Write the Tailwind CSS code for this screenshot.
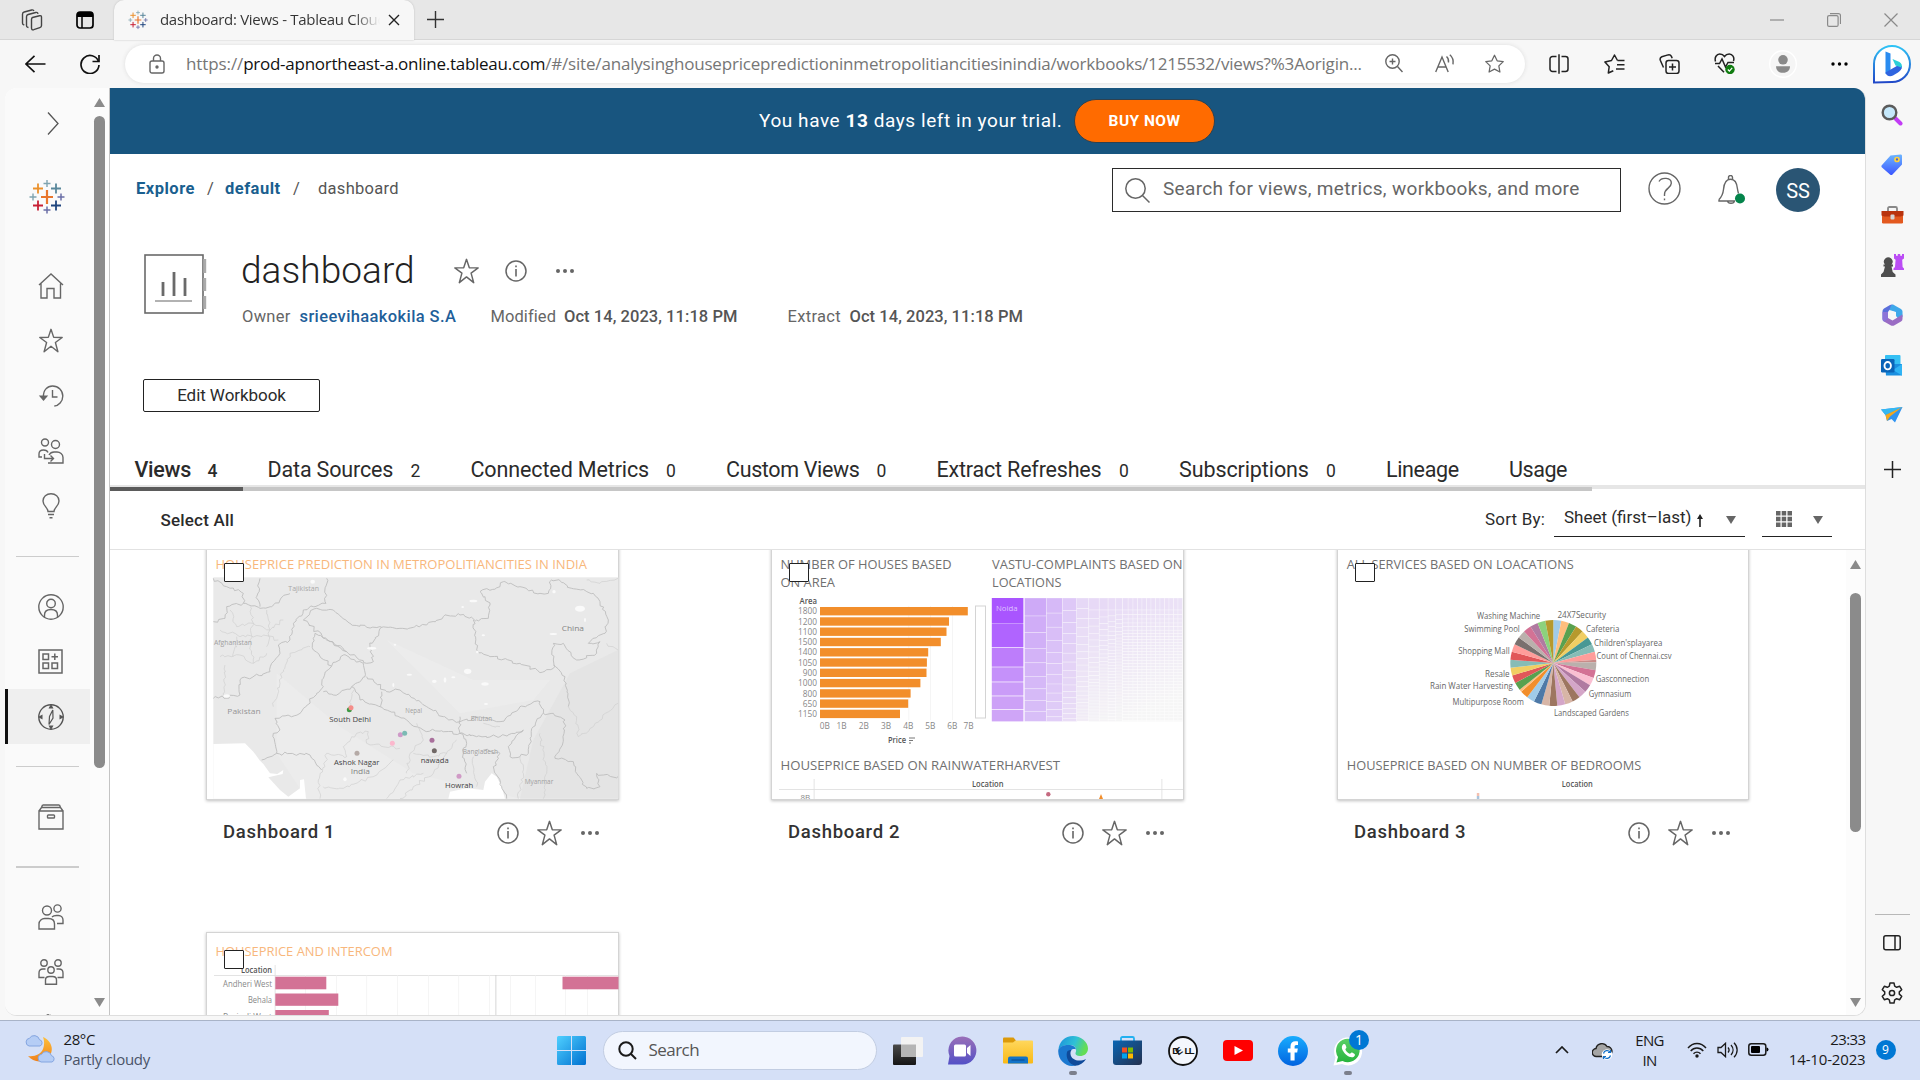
<!DOCTYPE html>
<html lang="en">
<head>
<meta charset="utf-8">
<title>dashboard: Views - Tableau Cloud</title>
<script src="https://cdn.jsdelivr.net/npm/@tailwindcss/browser@4"></script>
</head>
<body class="w-[1920px] h-[1080px] overflow-hidden bg-[#f7f7f7] font-['Roboto',sans-serif] text-[#2b2b2b] flex flex-col">

<svg width="0" height="0" class="absolute">
  <defs>
    <symbol id="star" viewBox="0 0 24 24"><path d="M12 .8l2.700 8.100 8.500.1-6.800 5 2.500 9.200L12 17.700l-6.900 5.500 2.500-9.200-6.800-5 8.500-.1z" fill="none" stroke="#666" stroke-width="1.4" stroke-linejoin="round"/></symbol>
    <symbol id="info" viewBox="0 0 22 22"><circle cx="11" cy="11" r="10" fill="none" stroke="#666" stroke-width="1.5"/><path d="M11 9v7.500M11 5.600v1.700" stroke="#666" stroke-width="1.6"/></symbol>
    <symbol id="dots" viewBox="0 0 18 4"><g fill="#666"><circle cx="2" cy="2" r="2"/><circle cx="9" cy="2" r="2"/><circle cx="16" cy="2" r="2"/></g></symbol>
    <symbol id="tab-logo" viewBox="-18 -20 36 40">
      <path d="M-6 0H6M0-7V7" stroke="#e8762d" stroke-width="2.2"/>
      <path d="M-14-8.500h10M-9-13.500v10" stroke="#eb912c" stroke-width="1.8"/>
      <path d="M4-8.500h10M9-13.500v10" stroke="#59879b" stroke-width="1.8"/>
      <path d="M-14 8.500h10M-9 3.500v10" stroke="#c72035" stroke-width="1.8"/>
      <path d="M4 8.500h10M9 3.500v10" stroke="#1f457e" stroke-width="1.8"/>
      <path d="M-3.500-13.500h7M0-17v7M-17.500 0h7M-14-3.500v7" stroke="#7fa4b0" stroke-width="1.4"/>
      <path d="M-3.500 13h7M0 9.500v7M10.500 0h7M14-3.500v7" stroke="#6a6ea6" stroke-width="1.5"/>
    </symbol>
    <linearGradient id="g-win" x1="0" y1="0" x2="1" y2="1"><stop offset="0" stop-color="#4fd0ff"/><stop offset="1" stop-color="#0070d0"/></linearGradient>
    <linearGradient id="g-bing" x1="0" y1="0" x2="0" y2="1"><stop offset="0" stop-color="#2fc3f5"/><stop offset="1" stop-color="#2148c8"/></linearGradient>
    <linearGradient id="g-tag" x1="0" y1="0" x2="0" y2="1"><stop offset="0" stop-color="#6db6ff"/><stop offset="1" stop-color="#3b55ff"/></linearGradient>
    <linearGradient id="g-moon" x1="0" y1="0" x2="0" y2="1"><stop offset="0" stop-color="#fdc03c"/><stop offset="1" stop-color="#f0811a"/></linearGradient>
    <linearGradient id="g-chat" x1="0" y1="0" x2="0" y2="1"><stop offset="0" stop-color="#9a6fb8"/><stop offset="1" stop-color="#5350c6"/></linearGradient>
    <linearGradient id="g-fold" x1="0" y1="0" x2="0" y2="1"><stop offset="0" stop-color="#ffd75c"/><stop offset="1" stop-color="#f9b916"/></linearGradient>
    <linearGradient id="g-edge" x1="0" y1="0" x2="1" y2=".3"><stop offset="0" stop-color="#1b8fdc"/><stop offset=".6" stop-color="#2fc1d6"/><stop offset="1" stop-color="#63dd55"/></linearGradient>
    <linearGradient id="g-store" x1="0" y1="0" x2="1" y2="1"><stop offset="0" stop-color="#0a66b4"/><stop offset="1" stop-color="#24304e"/></linearGradient>
    <linearGradient id="g-fb" x1="0" y1="0" x2="0" y2="1"><stop offset="0" stop-color="#18acfe"/><stop offset="1" stop-color="#0163e0"/></linearGradient>
    <linearGradient id="g-wa" x1="0" y1="0" x2="0" y2="1"><stop offset="0" stop-color="#5bd066"/><stop offset="1" stop-color="#27b43e"/></linearGradient>
    <linearGradient id="g-dark" x1="0" y1="0" x2="0" y2="1"><stop offset="0" stop-color="#4a4a4a"/><stop offset="1" stop-color="#151515"/></linearGradient>
  </defs>
</svg>

<!-- tab strip -->
<header class="h-10 shrink-0 bg-[#e7e7e7] border-b border-[#d6d6d6] flex items-center font-['Open_Sans',sans-serif]">
  <svg class="ml-[21px] shrink-0" width="23" height="24" viewBox="0 0 23 24" fill="none" stroke="#444" stroke-width="1.4"><path d="M11.500 9.500l7-1.800q2-.4 2 1.600v8.200q0 1.700-1.700 2.200l-6 2q-2.300.6-2.300-1.600v-8.600q0-1.600 1-2z"/><path d="M7.500 19.500l-1-.3q-1-.5-1-1.700V8.800Q5.500 7 7.200 6.500l7.500-2q2-.4 2.300 1.300"/><path d="M3.300 17l-.8-.3q-1-.5-1-1.700V6.300Q1.500 4.500 3.200 4l7.500-2q1.800-.4 2.200 1"/></svg>
  <svg class="ml-8 shrink-0" width="18" height="18" viewBox="0 0 18 18"><rect x="1" y="1" width="16" height="16" rx="3" fill="none" stroke="#000" stroke-width="1.7"/><path d="M1 4a3 3 0 013-3h10a3 3 0 013 3v2H1z"/><path d="M6 5v12" stroke="#000" stroke-width="1.5"/></svg>
  <div class="ml-5 w-[300px] h-10 bg-[#f7f7f7] rounded-t-[10px] shadow-[0_0_2px_#bbb] flex items-center pl-[14px]">
    <svg width="20" height="22" class="shrink-0"><use href="#tab-logo"/></svg>
    <span class="ml-3 w-[220px] overflow-hidden whitespace-nowrap text-[15px] tracking-[-0.305px] leading-10 -mt-px bg-linear-to-r from-[#333] from-88% to-transparent bg-clip-text text-transparent">dashboard: Views - Tableau Cloud</span>
    <svg class="ml-2 shrink-0" width="12" height="12" viewBox="0 0 12 12"><path d="M1 1l10 10M11 1L1 11" stroke="#222" stroke-width="1.4"/></svg>
  </div>
  <svg class="ml-[13px] shrink-0" width="17" height="17" viewBox="0 0 17 17"><path d="M8.500 0v17M0 8.500h17" stroke="#333" stroke-width="1.4"/></svg>
  <div class="ml-auto flex items-center pr-[22px]">
    <svg width="14" height="14" viewBox="0 0 14 14"><path d="M0 7h14" stroke="#8a8a8a" stroke-width="1.2"/></svg>
    <svg class="ml-[43px]" width="14" height="14" viewBox="0 0 14 14" fill="none" stroke="#8a8a8a" stroke-width="1.2"><rect x=".6" y="2.6" width="10.5" height="10.8" rx="1.5"/><path d="M3 .7h8.500a2 2 0 012 2V11"/></svg>
    <svg class="ml-[43px]" width="14" height="14" viewBox="0 0 14 14"><path d="M.5.5l13 13M13.500.5l-13 13" stroke="#8a8a8a" stroke-width="1.2"/></svg>
  </div>
</header>

<!-- address row -->
<div class="h-12 shrink-0 flex items-center font-['Open_Sans',sans-serif]">
  <svg class="ml-[25px] -mt-px shrink-0" width="21" height="18" viewBox="0 0 21 18" fill="none" stroke="#111" stroke-width="1.6"><path d="M20.500 9H1M9.500 .8L1 9l8.500 8.200"/></svg>
  <svg class="ml-[33px] -mt-px shrink-0" width="22" height="20" viewBox="0 0 22 20" fill="none" stroke="#111" stroke-width="1.7"><path d="M19.500 7.500A9 9 0 1020 11"/><path d="M20 1v6.500h-6.500"/></svg>
  <div class="ml-6 w-[1400px] h-[38px] bg-white rounded-full shadow-[0_0_4px_#ddd] flex items-center">
    <svg class="ml-6 -mt-px shrink-0" width="16" height="20" viewBox="0 0 16 20" fill="none" stroke="#666" stroke-width="1.4"><rect x="1" y="7" width="14" height="12" rx="2"/><path d="M4.500 7V4.500a3.500 3.500 0 017 0V7"/><circle cx="8" cy="13" r="1" fill="#666"/></svg>
    <div class="ml-[21px] w-[1176px] whitespace-nowrap text-[17px] leading-6 text-[#767676] tracking-[-0.185px]"><span class="tracking-[-0.1px]">https://</span><span class="text-[#111] tracking-[-0.264px]">prod-apnortheast-a.online.tableau.com</span>/#/site/analysinghousepricepredictioninmetropolitiancitiesinindia/workbooks/1215532/views?%3Aorigin...</div>
    <svg class="ml-[23px] -mt-px shrink-0" width="18" height="19" viewBox="0 0 18 19" fill="none" stroke="#666" stroke-width="1.4"><circle cx="7.5" cy="7.5" r="6.7"/><path d="M12.500 12.500l5 5.500M4.500 7.500h6M7.500 4.500v6"/></svg>
    <svg class="ml-[32px] -mt-px shrink-0" width="20" height="19" viewBox="0 0 20 19" fill="none" stroke="#666" stroke-width="1.4"><path d="M.7 18L7 3l6.200 15M3 13h8"/><path d="M11.500 2.500c1.800 1.500 2.300 3.500 2 6M14.800.8c3 2.500 3.800 6 3.200 9.500"/></svg>
    <svg class="ml-[29px] -mt-px shrink-0" width="21" height="20" viewBox="0 0 24 24"><path d="M12 1.500l3.200 6.700 7.300 1-5.300 5.100 1.300 7.300L12 18.100l-6.500 3.500 1.300-7.300L1.500 9.200l7.300-1z" fill="none" stroke="#666" stroke-width="1.5" stroke-linejoin="round"/></svg>
  </div>
  <div class="ml-[24px] -mt-px flex items-center">
    <svg width="20" height="20" viewBox="0 0 20 20" fill="none" stroke="#222" stroke-width="1.5"><path d="M7.500 2.500H3.500a2.500 2.500 0 00-2.500 2.500v10a2.500 2.500 0 002.500 2.500h4M12.500 2.500h4a2.500 2.500 0 012.500 2.500v10a2.500 2.500 0 01-2.500 2.500h-4M10 .2v19.600"/></svg>
    <svg class="ml-[35px]" width="21" height="20" viewBox="0 0 21 20" fill="none" stroke="#222" stroke-width="1.5"><path d="M13.500 6.500L10.500 1 7.500 6.500.9 8l4.300 4.700-.9 6.300 5-2.300M13.500 6.500H20.500M13 10.800h7.500M12 15h8.500" stroke-linejoin="round"/></svg>
    <svg class="ml-[34px]" width="21" height="20" viewBox="0 0 21 20" fill="none" stroke="#222" stroke-width="1.5"><rect x="7" y="6.5" width="13" height="13" rx="2.5"/><path d="M13.500 9.500v7M10 13h7M4.500 13.500L1.300 6.200C.8 4.500 1.300 3.300 2.800 2.700L9 .9c1.800-.4 2.800.2 3.400 1.500l.8 1.800"/></svg>
    <svg class="ml-[34px]" width="22" height="21" viewBox="0 0 22 21" fill="none" stroke="#222" stroke-width="1.5"><path d="M1.500 8.500C.3 4.500 2.500 1 5.800 1c2.200 0 3.700 1 4.700 2.500C11.500 2 13.200 1 15.200 1c3.300 0 5.500 3.500 4.300 7M1 10.500h4.500L8 6l3.500 8 2.500-4.500h6M4 13l6 6.300"/><circle cx="16" cy="16.5" r="4.7" fill="#107c10" stroke="none"/><path d="M13.800 16.500l1.600 1.600 2.800-3.200" stroke="#fff" stroke-width="1.2"/></svg>
    <svg class="ml-[33px]" width="28" height="28" viewBox="0 0 28 28"><circle cx="14" cy="14" r="13.3" fill="#f5f5f5" stroke="#fff" stroke-width="1.4"/><g fill="#8a8a8a"><circle cx="14" cy="9.8" r="4.8"/><path d="M7 16.300h14c0 4-2.500 6.500-7 6.500s-7-2.500-7-6.500z"/></g></svg>
    <svg class="ml-[34px]" width="17" height="4" viewBox="0 0 17 4"><circle cx="2" cy="2" r="1.7"/><circle cx="8.5" cy="2" r="1.7"/><circle cx="15" cy="2" r="1.7"/></svg>
    <svg class="ml-[24px]" width="40" height="40" viewBox="0 0 40 40"><path d="M2 38.500V20A18 18 0 1120 38z" fill="#fff" stroke="url(#g-bing)" stroke-width="2"/><path d="M13.500 7.500l5 2v17l-5 3.500z" fill="#2a8cf0"/><path d="M13.500 28.500l13-7.500 3.500 1c0 3.500-2 5-4 6.500l-5 3c-3 1.500-7 .5-7.500-3z" fill="#2f64e0"/><path d="M20.500 15l7 3c2.200 1.500 2.800 3.500 2 5.500l-6-2z" fill="#2bd0d8"/></svg>
  </div>
</div>

<div class="h-[932px] shrink-0 flex">
  <!-- page -->
  <div class="ml-[5px] w-[1861px] h-[928px] rounded-[12px] overflow-hidden border-b border-r border-[#dedede] bg-white flex">

    <!-- site navigation -->
    <nav class="w-[85px] pl-px shrink-0 bg-[#fafafa] flex flex-col overflow-hidden">
      <svg class="mt-[24px] ml-[41px] shrink-0" width="12" height="23" viewBox="0 0 12 23" fill="none" stroke="#555" stroke-width="1.3"><path d="M1 .5l10 11L1 22.500"/></svg>
      <svg class="mt-[42px] ml-[23px] shrink-0" width="36" height="40"><use href="#tab-logo"/></svg>
      <div class="mt-[41px] flex flex-col text-[#666]">
        <div class="h-[55px] pl-[32px] flex items-center"><svg width="26" height="26" viewBox="0 0 26 26" fill="none" stroke="currentColor" stroke-width="1.4"><path d="M1 12L13 1l12 11M3 10.500V25h6v-9.500h7V25h6.500V10.500"/></svg></div>
        <div class="h-[55px] pl-[33px] flex items-center"><svg width="24" height="25"><use href="#star"/></svg></div>
        <div class="h-[55px] pl-[32px] flex items-center"><svg width="26" height="22" viewBox="0 0 26 22" fill="none" stroke="currentColor" stroke-width="1.4"><path d="M5.500 12C5 5 9.500 1 14.500 1c6 0 10.300 4.500 10.300 10s-4.300 10-8.500 10M14.500 5v7h5"/><path d="M.8 10.500h9.400L5.500 16z" fill="currentColor" stroke="none"/></svg></div>
        <div class="h-[55px] pl-[32px] flex items-center"><svg width="26" height="26" viewBox="0 0 26 26" fill="none" stroke="currentColor" stroke-width="1.4"><circle cx="7" cy="4.5" r="3.5"/><circle cx="17.5" cy="6.5" r="4"/><path d="M4 19H1v-3c0-2.500 2-4 4.500-4 2.500 0 4 1 4.500 2.500M10 25h15v-5.500c0-3.500-3-5.500-6-5.500h-3c-2.500 0-4 1.300-5 3M6.500 16v4.500h9M12.500 17.500l3 3-3 3"/></svg></div>
        <div class="h-[55px] pl-[32px] flex items-center"><svg width="26" height="26" viewBox="0 0 26 26" fill="none" stroke="currentColor" stroke-width="1.4"><path d="M10 18.500c0-4-5-5.500-5-10.500 0-4.500 3.500-7.300 8-7.300S21 3.500 21 8c0 5-5 6.500-5 10.500zM10 21.500h6M11.500 24.700h3"/></svg></div>
      </div>
      <div class="mt-[23px] ml-[10px] w-[63px] h-px shrink-0 bg-[#ccc]"></div>
      <div class="mt-[22px] flex flex-col text-[#666]">
        <div class="h-[55px] pl-[32px] flex items-center"><svg width="26" height="26" viewBox="0 0 26 26" fill="none" stroke="currentColor" stroke-width="1.4"><circle cx="13" cy="13" r="12.2"/><circle cx="13" cy="9.5" r="4.3"/><path d="M6.500 23v-2c0-3.500 2.500-5.500 6.500-5.500s6.500 2 6.500 5.500v2"/></svg></div>
        <div class="h-[55px] pl-[32px] flex items-center"><svg width="25" height="25" viewBox="0 0 25 25" fill="none" stroke="currentColor" stroke-width="1.5"><rect x="1" y="1" width="23" height="23"/><path d="M5 5h5.500v5.500H5zM5 14h5.500v5.500H5zM14 14h5.500v5.500H14zM16.800 4.500V11M13.500 7.800h6.500"/></svg></div>
        <div class="h-[55px] -ml-px pl-[30px] border-l-[3px] border-[#111] bg-[#efefef] flex items-center"><svg width="26" height="26" viewBox="0 0 26 26" fill="none" stroke="#555" stroke-width="1.4"><circle cx="13" cy="13" r="12.2"/><path d="M14.800 6l.2 8-4 6.500.5-8z" stroke-width="1.2"/><path d="M13 0l2.500 4.500h-5zM13 26l2.500-4.500h-5zM0 13l4.500-2.500v5zM26 13l-4.500-2.500v5z" fill="#555" stroke="none"/></svg></div>
      </div>
      <div class="mt-[22px] ml-[10px] w-[63px] h-px shrink-0 bg-[#ccc]"></div>
      <div class="mt-[22px] h-[55px] shrink-0 pl-[32px] flex items-center"><svg width="26" height="26" viewBox="0 0 26 26" fill="none" stroke="#666" stroke-width="1.4"><path d="M1 7h24v18H1zM1 7l2.500-3.500h19L25 7M4.500 1h17M3.500 3.500L4.500 1M22.500 3.500l-1-2.500"/><rect x="9.5" y="11" width="7" height="3" rx=".8"/></svg></div>
      <div class="mt-[22px] ml-[10px] w-[63px] h-0.5 shrink-0 bg-[#ccc]"></div>
      <div class="mt-[21px] flex flex-col text-[#666] shrink-0">
        <div class="h-[55px] pl-[32px] flex items-center"><svg width="26" height="26" viewBox="0 0 26 26" fill="none" stroke="currentColor" stroke-width="1.4"><circle cx="9" cy="6.5" r="4.5"/><circle cx="19.5" cy="4.5" r="3.6"/><path d="M1 25v-5c0-3.500 3-5.500 5.500-5.500h4c3.500 0 6 2 6 5.500v5zM14 13c1-1 3-1.500 4.500-1.500h2c2.500 0 4.500 2 4.500 4.500v3.500h-6"/></svg></div>
        <div class="h-[55px] pl-[32px] flex items-center"><svg width="26" height="26" viewBox="0 0 26 26" fill="none" stroke="currentColor" stroke-width="1.4"><circle cx="6" cy="4" r="3.2"/><circle cx="20" cy="4" r="3.2"/><circle cx="13" cy="11" r="3.2"/><path d="M6.500 18.500H1V14c0-2.500 1.500-4 4-4h2.500M19.500 18.500H25V14c0-2.500-1.500-4-4-4h-2.500M7.500 25.300V21c0-2.500 2-3.500 4-3.500h3c2 0 4 1 4 3.500v4.300z"/></svg></div>
        <div class="h-[55px] pl-[33px] pt-[15px]"><svg width="24" height="4" viewBox="0 0 24 4" fill="none" stroke="#666" stroke-width="1.5"><path d="M0 2.500h4M7 1.500h5M14 2.500h4M20 3h4M9 0v4"/></svg></div>
      </div>
    </nav>
    <div class="w-5 shrink-0 bg-[#fcfcfc] border-r border-[#c4c4c4] flex flex-col items-center">
      <svg class="mt-[10px]" width="11" height="9"><path d="M5.500 0L11 9H0z" fill="#8b8b8b"/></svg>
      <div class="mt-[9px] w-[11px] h-[652px] rounded-full bg-[#8b8b8b]"></div>
      <svg class="mt-auto mb-[8px]" width="11" height="9"><path d="M5.500 9L11 0H0z" fill="#8b8b8b"/></svg>
    </div>

    <main class="flex-1 min-w-0 flex flex-col">
      <div class="h-[66px] shrink-0 bg-[#18557f] text-white flex items-center pl-[649px]">
        <span class="w-[305px] whitespace-nowrap text-[19px] tracking-[0.570px]">You have <b>13</b> days left in your trial.</span>
        <button class="ml-[10px] pt-0.5 w-[141px] h-[44px] rounded-full bg-[#ff6b00] border border-[#2d4150] text-[15.5px] font-bold tracking-[0.450px]">BUY NOW</button>
      </div>

      <div class="h-[72px] shrink-0 flex items-center pl-[26px] text-[16.5px]">
        <div class="flex items-center -mt-px text-[#555]">
          <a class="w-[60px] font-bold text-[#1a5f8f] tracking-[0.5px]">Explore</a><span class="ml-[11px] w-[8px]">/</span>
          <a class="ml-[10px] w-[57px] font-bold text-[#1a5f8f] tracking-[0.5px]">default</a><span class="ml-[11px] w-[8px]">/</span>
          <span class="ml-[17px] tracking-[0.28px]">dashboard</span>
        </div>
        <div class="ml-auto w-[509px] h-[44px] border border-[#2b2b2b] flex items-center pl-[12px] text-[#666]">
          <svg width="25" height="25" viewBox="0 0 25 25" fill="none" stroke="#666" stroke-width="1.5"><circle cx="10.5" cy="10.5" r="9.7"/><path d="M17.500 17.500l7 7"/></svg>
          <span class="ml-[13px] text-[19px] tracking-[0.32px] whitespace-nowrap -mt-px">Search for views, metrics, workbooks, and more</span>
        </div>
        <svg class="ml-[27px] -mt-[3px]" width="33" height="33" viewBox="0 0 33 33" fill="none" stroke="#666" stroke-width="1.4"><circle cx="16.5" cy="16.5" r="15.5"/><path d="M11 9.500c2.500-4.500 12.500-4.300 12.300 1.800C23.200 16.500 16.500 16 16.500 22.500v1.500M16.500 26.500v1.700"/></svg>
        <svg class="ml-[37px]" width="28" height="30" viewBox="0 0 28 30" fill="none" stroke="#666" stroke-width="1.4"><path d="M1 24.500c3.500-3.500 4-5.500 4.500-10C6 8 8.500 4.200 12.500 4.200S19 8 19.500 14c.3 2 .6 3 1 4.500M1 24.500V26h16M10.500 4V2.500a2 2 0 014 0V4M9.500 26c.5 3 6.500 3 7 0"/><circle cx="22" cy="23.5" r="5" fill="#04844b" stroke="none"/></svg>
        <div class="ml-[30px] mr-[45px] size-[44px] rounded-full bg-[#2a5574] text-white text-[20px] flex items-center justify-center pt-0.5">SS</div>
      </div>

      <div class="h-[153px] shrink-0 pl-[34px] flex">
        <svg class="mt-[28px] shrink-0" width="63" height="60" viewBox="0 0 63 60" fill="none" stroke="#6a6a6a" stroke-width="1.6"><rect x="1" y="1" width="58" height="58"/><path d="M60.700 5v14M60.700 24v13M60.700 42v13" stroke="#aaa" stroke-width="3"/><path d="M19 28v14M30 18v24M41 24v18" stroke-width="2.8"/><path d="M11 47h37" stroke="#999"/></svg>
        <div class="ml-[35px] pt-[27px]">
          <div class="h-9 flex items-center">
            <h1 class="w-[173px] -ml-px mr-px text-[37px] leading-9 font-light text-[#222] tracking-[0.05px]">dashboard</h1>
            <svg class="ml-[39px]" width="25" height="26"><use href="#star"/></svg>
            <svg class="ml-[26px]" width="22" height="22"><use href="#info"/></svg>
            <svg class="ml-[29px]" width="18" height="4"><use href="#dots"/></svg>
          </div>
          <div class="mt-[18px] h-5 flex items-center whitespace-nowrap text-[16.5px] text-[#666]">
            <span class="w-[49px] tracking-[0.28px]">Owner</span>
            <span class="ml-[8.5px] w-[157px] font-medium text-[#1f5f9a] tracking-[0.39px]">srieevihaakokila S.A</span>
            <span class="ml-[34px] w-[65px] tracking-[0.08px]">Modified</span>
            <span class="ml-[8.5px] w-[173px] font-medium text-[#555] tracking-[0.05px]">Oct 14, 2023, 11:18 PM</span>
            <span class="ml-[50.5px] w-[54px] tracking-[0.32px]">Extract</span>
            <span class="ml-[8px] font-medium text-[#555] tracking-[0.05px]">Oct 14, 2023, 11:18 PM</span>
          </div>
        </div>
      </div>

      <button class="ml-[33px] pt-px w-[177px] h-[33px] shrink-0 border border-[#222] rounded-[2px] text-[17px] tracking-[-0.06px]">Edit Workbook</button>

      <div class="mt-[33px] h-[40px] shrink-0 pl-[24.5px] flex items-baseline gap-[50px] text-[21.5px] leading-[50px] whitespace-nowrap [&_i]:not-italic [&_i]:text-[17.5px] [&_i]:w-[10px]">
        <div class="flex items-baseline gap-[17px] font-medium"><span class="w-[56px] tracking-[-0.3px]">Views</span><i>4</i></div>
        <div class="flex items-baseline gap-[17px]"><span class="w-[126px] tracking-[-0.15px]">Data Sources</span><i>2</i></div>
        <div class="flex items-baseline gap-[17px]"><span class="w-[178.5px] tracking-[-0.12px]">Connected Metrics</span><i>0</i></div>
        <div class="flex items-baseline gap-[17px]"><span class="w-[133.5px] tracking-[-0.36px]">Custom Views</span><i>0</i></div>
        <div class="flex items-baseline gap-[17px]"><span class="w-[165.5px] tracking-[-0.19px]">Extract Refreshes</span><i>0</i></div>
        <div class="flex items-baseline gap-[17px]"><span class="w-[130px] tracking-[-0.1px]">Subscriptions</span><i>0</i></div>
        <span class="w-[73px] tracking-[-0.364px]">Lineage</span>
        <span class="tracking-[-0.45px]">Usage</span>
      </div>
      <div class="relative h-1 shrink-0 bg-[#e6e6e6]">
        <div class="absolute left-0 top-0.5 h-1 w-[1482px] bg-[#c6c6c6]"><div class="h-1 w-[133px] bg-[#5b5b5b]"></div></div>
      </div>

      <div class="h-[61px] shrink-0 border-b border-[#e2e2e2] flex items-center pl-[50.5px] text-[17px] whitespace-nowrap">
        <span class="font-medium tracking-[0.196px] mt-[3px]">Select All</span>
        <span class="ml-auto w-[60px] mt-0.5 tracking-[0.188px]">Sort By:</span>
        <div class="ml-[9px] w-[191px] h-[36px] border-b border-[#222] flex items-center pl-[10px]">
          <span class="w-[130px] -mt-px">Sheet (first–last)</span>
          <svg class="ml-0.5 mt-1" width="8" height="13" viewBox="0 0 8 13"><path d="M4 0l3 5H4.800v8H3.200V5H1z" fill="#222"/></svg>
          <svg class="ml-[22px] mt-0.5" width="10" height="8"><path d="M0 0h10L5 8z" fill="#666"/></svg>
        </div>
        <div class="ml-[17px] mr-[33px] w-[70px] h-[36px] border-b border-[#222] flex items-center pl-[14px]">
          <svg width="16" height="16" viewBox="0 0 16 16" fill="#666"><path d="M0 0h4.500v4.500H0zM5.700 0h4.500v4.500H5.700zM11.500 0H16v4.500h-4.500zM0 5.700h4.500v4.500H0zM5.700 5.700h4.500v4.500H5.700zM11.500 5.700H16v4.500h-4.500zM0 11.500h4.500V16H0zM5.700 11.500h4.500V16H5.700zM11.500 11.500H16V16h-4.500z"/></svg>
          <svg class="ml-[21px] mt-0.5" width="10" height="8"><path d="M0 0h10L5 8z" fill="#666"/></svg>
        </div>
      </div>

      <div class="flex-1 min-h-0 flex overflow-hidden">
        <div class="flex-1 min-w-0 overflow-hidden">
          <div id="views" class="-mt-[5px] ml-[96px] w-[1543px] grid grid-cols-[413px_413px_413px] gap-x-[152px]"></div>
        </div>
        <div class="w-[19px] shrink-0 bg-[#fcfcfc] flex flex-col items-center pr-[1px]">
          <svg class="mt-[10px] shrink-0" width="11" height="9"><path d="M5.500 0L11 9H0z" fill="#8b8b8b"/></svg>
          <div class="mt-[24px] w-[11px] h-[239px] rounded-full bg-[#8b8b8b]"></div>
          <svg class="mt-auto mb-[8px]" width="11" height="9"><path d="M5.500 9L11 0H0z" fill="#8b8b8b"/></svg>
        </div>
      </div>
    </main>
  </div>

  <!-- browser sidebar -->
  <aside class="flex-1 flex flex-col items-center pr-[2px]">
    <div class="mt-[2px] flex flex-col items-center *:h-[50px] *:flex *:items-center">
      <div><svg width="22" height="22" viewBox="0 0 22 22"><path d="M14 14l5.500 5.500" stroke="#c23cf5" stroke-width="4" stroke-linecap="round"/><circle cx="8.5" cy="8.5" r="6.8" fill="#c5e8fb" stroke="#5b5b5b" stroke-width="2.4"/></svg></div>
      <div><svg width="22" height="22" viewBox="0 0 22 22"><path d="M9.500 1.500L19.500.5c1 0 1.500.5 1.500 1.500v8.500L11.500 20.500c-.8.8-1.700.8-2.500 0L1 13.500c-.8-.8-.8-1.700 0-2.500z" fill="url(#g-tag)"/><circle cx="16" cy="5.5" r="2" fill="#4a60d8" stroke="#ffd23c" stroke-width="1.7"/></svg></div>
      <div><svg width="23" height="18" viewBox="0 0 23 18"><path d="M7 6V2.500Q7 1 8.500 1h6Q16 1 16 2.500V6" fill="none" stroke="#888" stroke-width="1.8"/><rect x="1" y="5" width="21" height="12.5" rx="1.2" fill="#e3591f"/><path d="M.5 5h22v4.500l-3 1h-16l-3-1z" fill="#b9330d"/><rect x="9.5" y="8.5" width="4" height="5" rx="1" fill="#d5d5d5"/></svg></div>
      <div><svg width="23" height="23" viewBox="0 0 23 23"><path d="M13 0h2v1.800h1.800V0h2.400v1.800H21V0h2v4.500l-1.800 1.200.4 7.300 1.400 1.500V16H12.500v-1.500L14 13l.6-7.300L13 4.500z" fill="#bb4df5"/><path d="M0 23v-2.500l2.500-2.500L4 12.500H2.500v-2H4a4.300 4.300 0 116.500 0H12v2h-1.500l1.200 5.500 2.800 2.500V23z" fill="#4e4e4e"/></svg></div>
      <div><svg width="21" height="22" viewBox="0 0 21 22"><path d="M8 1L2 4.500Q.5 5.500.5 7v8q0 1.500 1.500 2.500l4 .500V8.500Q6 7 7.500 6L13 2.500 11.500 1Q10 0 8 1z" fill="#5b6fdb"/><path d="M11 .5l8 4.500q1.500 1 1.500 2.500V13L17 15.500 14 12V8L7.500 6 9 1.500z" fill="#3fa8ea"/><path d="M20.500 10.500V15q0 1.500-1.500 2.500l-6.500 3.800q-2 1-4 0L2 17.500 6 14l4.500 2.500z" fill="#9a6cc4"/><path d="M.5 8v7q0 1.500 1.500 2.500l4-3V8z" fill="#8d74d8"/><circle cx="10.500" cy="11" r="3.6" fill="#f7f7f7"/></svg></div>
      <div><svg width="22" height="21" viewBox="0 0 22 21"><rect x="4" y="0" width="15.5" height="12" rx="1" fill="#35c0f4"/><path d="M4 9h17v11.500H5z" fill="#1a8fe0"/><path d="M21 9l-9 6 9 5.500z" fill="#2fb4f5"/><rect x="0" y="4" width="13.5" height="13.5" rx="1.2" fill="#0a64b8"/><ellipse cx="6.7" cy="10.7" rx="3.2" ry="3.7" fill="none" stroke="#fff" stroke-width="1.9"/></svg></div>
      <div><svg width="22" height="16" viewBox="0 0 22 16"><path d="M0 2.500L21.500 0 14 15.500 10.500 12 6 14 4.500 8z" fill="#2f94f2"/><path d="M0 2.500L21.500 0 4.500 8z" fill="#35b8f2"/><path d="M21 .3L4.500 8 6 14l3-4.500z" fill="#f4a81d"/></svg></div>
    </div>
    <svg class="mt-[21px]" width="17" height="17" viewBox="0 0 17 17"><path d="M8.500 0v17M0 8.500h17" stroke="#222" stroke-width="1.5"/></svg>
    <div class="mt-auto w-[35px] h-px bg-[#b8b8b8]"></div>
    <svg class="mt-[20px]" width="18" height="16" viewBox="0 0 18 16" fill="none" stroke="#222" stroke-width="1.5"><rect x=".8" y=".8" width="16.4" height="14" rx="2"/><path d="M12 .8v14"/></svg>
    <svg class="mt-[31px] mb-[16px]" width="22" height="22" viewBox="0 0 22 22" fill="none" stroke="#222" stroke-width="1.5" stroke-linejoin="round"><path d="M9 1h4l.7 3.200 1.900 1.100 3.100-1 2 3.400-2.400 2.200v2.200l2.400 2.200-2 3.400-3.100-1-1.900 1.100L13 21H9l-.7-3.200-1.900-1.100-3.100 1-2-3.400 2.400-2.200V9.900L1.300 7.700l2-3.400 3.100 1 1.900-1.100z"/><circle cx="11" cy="11" r="2.6"/></svg>
  </aside>
</div>

<!-- taskbar -->
<footer class="h-[60px] shrink-0 bg-[#d5e0f7] border-t border-[#a9b4c8] flex items-center font-['Open_Sans',sans-serif] text-[15px] text-[#1a1a1a]">
  <svg class="ml-[24px] -mt-1 shrink-0" width="32" height="30" viewBox="0 0 32 30"><path d="M19 3c9 4 12 14 5 21-6 5.500-15 4-20-2 7 1 13-2 15-7 1.500-4 1.500-8 0-12z" fill="url(#g-moon)"/><path d="M5 12a4 4 0 01.5-7.800 5.500 5.500 0 0110 1.500 3.300 3.300 0 01.5 6.300z" fill="#b5cdf5" stroke="#84a5e0"/><path d="M17 28a4 4 0 01.5-7.800 5.500 5.500 0 0110 1.500 3.300 3.300 0 01.5 6.300z" fill="#b5cdf5" stroke="#84a5e0"/></svg>
  <div class="ml-[7.5px] w-[110px] leading-5 whitespace-nowrap -mt-1"><div class="tracking-[-0.4px]">28°C</div><div class="text-[#4a5468] tracking-[-0.263px]">Partly cloudy</div></div>
  <svg class="ml-[383.500px] shrink-0" width="29" height="29" viewBox="0 0 29 29" fill="url(#g-win)"><path d="M0 1.500Q0 0 1.500 0H14v14H0zM15 0h12.500Q29 0 29 1.500V14H15zM0 15h14v14H1.500Q0 29 0 27.500zM15 15h14v12.500q0 1.500-1.500 1.500H15z"/></svg>
  <div class="ml-[17px] w-[274px] h-[39px] rounded-full bg-[#f2f6fe] border border-[#c2cde2] flex items-center pl-[14px] shrink-0">
    <svg width="19" height="19" viewBox="0 0 19 19" fill="none" stroke="#1a1a1a" stroke-width="2"><circle cx="8" cy="8" r="6.7"/><path d="M13 13l5 5"/></svg>
    <span class="ml-[11.5px] text-[17px] text-[#555] tracking-[-0.55px] -mt-px">Search</span>
  </div>
  <div class="ml-[3px] flex *:w-[55px] *:h-[58px] *:flex *:items-center *:justify-center *:relative shrink-0">
    <div><svg width="30" height="28" viewBox="0 0 30 28"><rect x="0" y="7.5" width="23" height="20.5" rx="1" fill="url(#g-dark)"/><rect x="8" y="0" width="22" height="20" rx="1" fill="#f3f3f3"/><rect x="8" y="7.5" width="15" height="12.5" fill="#b5b5b5"/></svg></div>
    <div><svg width="29" height="29" viewBox="0 0 29 29"><path d="M0 28.500L1.500 20A14 14 0 1114.500 28.500z" fill="url(#g-chat)"/><rect x="6" y="8.500" width="12" height="12" rx="1.500" fill="#fff"/><path d="M19 12l3.500-3v11L19 17z" fill="#fff"/></svg></div>
    <div><svg width="30" height="27" viewBox="0 0 30 27"><path d="M0 1.500Q0 .5 1 .5h9.500L13 3.500V8H0z" fill="#dc9a0a"/><path d="M0 5.500h10l2.500-2H29q1 0 1 1v21q0 1-1 1H1q-1 0-1-1z" fill="url(#g-fold)"/><path d="M5 26.500v-5q0-2 2-2h16q2 0 2 2v5z" fill="#1273c8"/><path d="M8.500 23h13" stroke="#0b4f94" stroke-width="1.2"/></svg></div>
    <div><svg width="30" height="30" viewBox="0 0 30 30"><path d="M.5 14C.8 6 7 0 15 0s15 6 15 12.500c0 5-4 7.500-8 7.500-3.500 0-5-1.500-4.500-3 1.500-3 .5-7.500-5-8C7 8.500 2 10.500.5 14z" fill="url(#g-edge)"/><path d="M.3 14C1.500 10.500 6.500 8.500 12 9c3.500.3 5.500 2 6 4.500-3-1.500-7 1-6.500 5.500.5 5 5.500 8.500 10.500 7-2 2.500-5 4-8 4C6 29.500-.5 22.500.3 14z" fill="#1b78d0"/><path d="M9 16c-1.500 6 2 12 8 13.700 5-.2 8.500-2.700 11-6.700-7 3.500-15 1-15.500-5-.2-1.500.2-3 1-4-2 0-4 .5-4.500 2z" fill="#0f4a9a"/></svg><span class="absolute bottom-[5px] left-[24px] w-2 h-1 rounded-full bg-[#7b7f8c]"></span></div>
    <div><svg width="29" height="29" viewBox="0 0 29 29"><path d="M8 6V2.500Q8 1 9.500 1h10Q21 1 21 2.500V6" fill="none" stroke="#22b0f0" stroke-width="1.8"/><path d="M0 4.500h29V26q0 3-3 3H3q-3 0-3-3z" fill="url(#g-store)"/><path d="M9 11.500h5v5H9z" fill="#f25022"/><path d="M15 11.500h5v5h-5z" fill="#7fba00"/><path d="M9 17.500h5v5H9z" fill="#00a4ef"/><path d="M15 17.500h5v5h-5z" fill="#ffb900"/></svg></div>
    <div><svg width="30" height="30" viewBox="0 0 30 30"><circle cx="15" cy="15" r="14" fill="#f4f7fd" stroke="#111" stroke-width="1.8"/><text x="4.2 10.200 16.400 20.800" y="18.400 19.600 18.400 18.400" rotate="0 -35 0 0" font-family="Liberation Sans, sans-serif" font-weight="700" font-size="9.5" fill="#111">DELL</text></svg></div>
    <div><svg width="30" height="21" viewBox="0 0 30 21"><rect width="30" height="21" rx="4" fill="#f00"/><path d="M11.500 6l8.500 4.500-8.500 4.500z" fill="#fff"/></svg></div>
    <div><svg width="30" height="30" viewBox="0 0 30 30"><circle cx="15" cy="15" r="15" fill="url(#g-fb)"/><path d="M12.500 24.500v-8H9.800v-4h2.700v-2.300c0-3.200 2-5 5-5 1 0 2 .2 2.500.3V9h-1.700c-1.300 0-1.700.8-1.700 1.700v1.800h3.200l-.6 4h-2.600v8z" fill="#fff"/></svg></div>
    <div><svg width="30" height="30" viewBox="0 0 30 30"><path d="M.5 29.500l2-8A14 14 0 119 28z" fill="#fff"/><path d="M3.500 26.500l1.500-5.500A11.800 11.800 0 119.500 25z" fill="url(#g-wa)"/><path d="M10 8.500c-3 3 .5 8 3.500 10.500s7.500 3.500 8.500 0c.3-1-2.500-2.600-3.300-2.600-1 0-1.200 1.500-2 1.300-1.800-.7-3.800-2.700-4.300-4.200-.2-.8 1.200-1.200 1-2.200C13 9.500 12 7 10 8.500z" fill="#fff"/></svg><span class="absolute top-[8px] left-[29px] size-5 rounded-full bg-[#0078d4] text-white text-[14px] leading-5 text-center">1</span><span class="absolute bottom-[5px] left-[24px] w-2 h-1 rounded-full bg-[#7b7f8c]"></span></div>
  </div>
  <div class="ml-auto flex items-center pr-[24.5px] whitespace-nowrap">
    <svg class="-mt-px" width="14" height="8" viewBox="0 0 14 8" fill="none" stroke="#1a1a1a" stroke-width="1.7"><path d="M1 7l6-6 6 6"/></svg>
    <svg class="ml-[23px]" width="21" height="18" viewBox="0 0 21 18"><path d="M4.500 14.500a4 4 0 01-.5-8 6 6 0 0111-2 5 5 0 015 4.500c0 3-2 5.500-5 5.500z" fill="#a5a5a5" stroke="#222" stroke-width="1.4"/><circle cx="15" cy="12.5" r="5.3" fill="#fff"/><path d="M11.500 11.500a3.700 3.700 0 016.500-1.500M18.500 13.500a3.700 3.700 0 01-6.500 1.500M18.500 8v2.500H16M11.500 17v-2.500H14" fill="none" stroke="#1270c8" stroke-width="1.2"/></svg>
    <div class="ml-[18px] w-[38px] leading-5 text-center tracking-[-0.7px] -mt-0.5">ENG<br>IN</div>
    <svg class="ml-[18px] -mt-0.5" width="20" height="16" viewBox="0 0 20 16" fill="none" stroke="#1a1a1a" stroke-width="1.4"><path d="M1 6c5-6 13-6 18 0M3.700 9c3.500-4 9-4 12.600 0M6.500 11.800c2-2.200 5-2.200 7 0"/><circle cx="10" cy="14" r="1.7" fill="#1a1a1a" stroke="none"/></svg>
    <svg class="ml-[10px] -mt-0.5" width="21" height="16" viewBox="0 0 21 16" fill="none" stroke="#1a1a1a" stroke-width="1.3"><path d="M1 5.500h3L8.500 1.300v13.400L4 10.500H1zM11 5.500c1.300 1.500 1.300 3.500 0 5M14 3c2.700 3 2.700 7 0 10M17 .8c4.200 4.200 4.200 10.200 0 14.400"/></svg>
    <svg class="ml-[10px] -mt-0.5" width="21" height="13" viewBox="0 0 21 13"><rect x=".8" y=".8" width="17" height="11.4" rx="2.5" fill="none" stroke="#1a1a1a" stroke-width="1.5"/><rect x="3" y="3" width="9" height="7" rx="1"/><path d="M18.500 4.500q2 0 2 2t-2 2z"/></svg>
    <div class="ml-[19px] w-[78px] leading-5 text-right -mt-1"><div class="tracking-[-0.58px]">23:33</div><div class="tracking-[-0.157px]">14-10-2023</div></div>
    <span class="ml-[10px] -mt-0.5 size-5 rounded-full bg-[#0078d4] text-white text-[12px] leading-[19px] text-center">9</span>
  </div>
</footer>

<script>
// Text label; w fixes the rendered width of the string.
function label(x, y, s, size, o) {
  o = o || {};
  return '<text x="' + x + '" y="' + y + '" font-family="Open Sans, sans-serif" font-size="' + size + '" fill="' + (o.c || '#707070') + '"' +
    (o.w ? ' textLength="' + o.w + '" lengthAdjust="spacingAndGlyphs"' : '') + (o.b ? ' font-weight="600"' : '') +
    (o.a ? ' text-anchor="' + o.a + '"' : '') + '>' + s + '</text>';
}
function box(x, y, w, h, fill, extra) {
  return '<rect x="' + x + '" y="' + y + '" width="' + w + '" height="' + h + '" fill="' + fill + '" ' + (extra || '') + '/>';
}

// Country borders: straight runs are split and nudged so that they read as natural lines.
let seed = 7;
function rnd() { seed = (seed * 16807) % 2147483647; return seed / 2147483647; }
function border(str, color, width) {
  const p = str.split(' ').map(q => q.split(',').map(Number));
  let d = 'M' + p[0];
  for (let i = 1; i < p.length; i++) {
    const [x0, y0] = p[i - 1], [x1, y1] = p[i];
    const n = Math.max(1, Math.round(Math.hypot(x1 - x0, y1 - y0) / 9));
    for (let k = 1; k <= n; k++) {
      const j = k < n ? 5 : 0;
      d += 'L' + (x0 + (x1 - x0) * k / n + (rnd() - .5) * j * 2).toFixed(1) + ' ' + (y0 + (y1 - y0) * k / n + (rnd() - .5) * j * 2).toFixed(1);
    }
  }
  return '<path d="' + d + '" fill="none" stroke="' + color + '" stroke-width="' + width + '"/>';
}
function mapThumb() {
  let g = box(40, 112, 1215, 664, '#e9e9e9');
  g += '<path d="M230 400L420 560 640 700 960 776H320L230 640zM560 300L820 420 1050 420 1000 480 780 520z" fill="#ececec"/>';
  g += '<path d="M1110 400L1254 330V776H960L1000 600z" fill="#e4e4e4"/>';
  g += '<path d="M40 612L135 610 160 635 180 662 190 672 210 700 232 702 250 690 248 702 205 712 240 750 265 770 300 745 300 720 312 718 318 776H40zM745 776L750 755 800 745 850 750 855 725 875 700 890 710 905 740 915 776z" fill="#fff"/>';
  ['40,115 80,140 130,160 130,190', '40,245 75,235 80,200 130,190 180,205 215,200 240,180 270,160', '180,115 170,170 180,200',
   '380,115 378,190 340,200 310,210 280,250 270,300 235,315 240,340 215,370 210,395 120,420 120,465 40,475',
   '310,240 350,205 400,210 450,250 500,262 545,262 510,320 520,365 500,370 440,335 380,300 310,240',
   '345,280 340,330 395,378 370,415 370,440 350,460 300,520 225,535 240,570 220,580 230,640 185,660',
   '395,378 430,345 490,370 495,410 455,440 400,465 370,455', '345,280 440,335',
   '545,262 600,265 680,255 730,230 780,225 830,240 865,235 870,195 840,155 900,140 910,125 960,140 1020,160 1045,160 1055,120 1090,128 1115,145 1180,160 1200,185 1225,240 1215,280 1165,310 1200,305 1190,340 1130,360 1090,310 1060,310 1060,360 1060,385 1020,398 960,370 870,350 830,330 820,240',
   '500,410 560,455 600,450 680,500 730,530 780,545 840,530 900,545 960,500 1020,485 1030,520 1060,520',
   '455,440 480,480 540,500 620,540 670,570 780,580', '1060,375 1095,410 1105,500',
   '1060,520 1095,540 1090,600 1065,655 1120,665 1130,700 1160,745 1200,740 1190,700 1254,710',
   '780,530 780,580 800,610 790,640 800,700', '850,630 900,640 880,680 905,740 920,776', '230,640 330,645 365,690',
   '1030,520 1000,560 985,640 960,650 930,650 925,620 970,570', '780,580 830,590 900,590 970,570', '545,455 540,500'
  ].forEach(s => g += border(s, '#bcbcbc', 2.6));
  ['380,640 375,680 355,720 360,776', '430,620 470,580 505,575 500,610 600,625', '650,550 670,600 630,640 620,700', '580,660 520,710 430,745 370,740',
   '600,776 640,740 700,700 740,640', '1105,500 1130,530 1135,590 1180,560 1254,490', '75,375 70,470', '90,210 110,260 160,250 210,270 250,240', '60,270 120,290 190,285 235,300',
   '60,350 120,345 160,370 200,340', '150,200 160,250 150,300 160,370', '200,210 210,270 200,320', '250,390 240,430 220,500', '330,320 270,340 250,390', '430,620 440,650 380,640',
   '960,650 970,700 955,776', '1020,580 1040,700 1030,776', '640,640 700,650 740,640 770,600', '460,440 450,500', '1160,120 1200,130 1254,115', '1220,310 1254,330', '820,650 830,740', '670,700 600,720 560,776', '110,290 100,350', '850,550 900,560'
  ].forEach(s => g += border(s, '#cfcfcf', 2));
  [[820,183,12,4],[788,201,4,3],[1140,206,15,9],[1062,155,5,5],[1060,282,11,3],[850,286,5,3],[585,314,4,3],[832,336,4,4],[628,404,8,3],[703,424,7,5],[803,394,11,8],[855,432,11,5],[735,420,4,8],[760,412,6,3],[858,492,6,3],[580,435,3,6],[515,325,14,4],[338,125,7,6],[435,718,5,6],[80,468,10,5],[1155,240,3,6]]
    .forEach(e => g += '<ellipse cx="' + e[0] + '" cy="' + e[1] + '" rx="' + e[2] + '" ry="' + e[3] + '" fill="#fafafa"/>');
  const t = (x, y, s, w, c, z) => { g += label(x, y, s, z || 23, { w: w, c: c }); };
  t(265, 153, 'Tajikistan', 92, '#a8a8a8', 20); t(42, 315, 'Afghanistan', 114, '#a0a0a0', 20); t(82, 521, 'Pakistan', 100, '#959595');
  t(1085, 272, 'China', 67, '#858585'); t(616, 519, 'Nepal', 50, '#a0a0a0', 20); t(812, 543, 'Bhutan', 64, '#a0a0a0', 20);
  t(788, 641, 'Bangladesh', 106, '#a0a0a0', 20); t(974, 731, 'Myanmar', 86, '#a0a0a0', 20); t(452, 702, 'India', 58, '#858585');
  t(388, 545, 'South Delhi', 125, '#444'); t(402, 676, 'Ashok Nagar', 136, '#444'); t(662, 668, 'nawada', 84, '#444'); t(735, 745, 'Howrah', 85, '#444');
  [[448,509,'#3f9a45'],[453,503,'#f58e8a'],[601,584,'#cf9ac8'],[614,580,'#7cbab4'],[577,610,'#fbb8cd'],[471,640,'#b5aaa6'],[696,601,'#a9709c'],[703,632,'#706866'],[777,709,'#d09ac6']]
    .forEach(e => g += '<circle cx="' + e[0] + '" cy="' + e[1] + '" r="7.5" fill="' + e[2] + '"/>');
  return label(9.5, 24, 'HOUSEPRICE PREDICTION IN METROPOLITIANCITIES IN INDIA', 13, { w: 371.5, c: '#f8b77c' }) +
    '<g transform="translate(-6 -5) scale(.33333)">' + g + '</g>';
}

function barThumb() {
  const X = v => +(v / 2.45 - 131).toFixed(1), Y = v => +(v / 3 - 185).toFixed(1);
  let g = label(9.5, 24, 'NUMBER OF HOUSES BASED', 13, { w: 171 }) + label(9.5, 42, 'ON AREA', 13, { w: 54.5 }) +
    label(221, 24, 'VASTU-COMPLAINTS BASED ON', 13, { w: 190.5 }) + label(221, 42, 'LOCATIONS', 13, { w: 69.5 }) +
    label(28.5, 58.5, 'Area', 8, { w: 17.5, b: 1, c: '#555' });
  [658, 711, 765].forEach(v => g += box(X(v), 61, .6, 114, '#eee'));
  [[1800, 803], [1200, 757], [1100, 751], [1500, 737], [1400, 706], [1050, 703], [900, 702], [1000, 687], [800, 663], [650, 657], [1150, 637]].forEach((r, i) => {
    const y = 62 + i * 10.27;
    g += box(49, y.toFixed(1), (X(r[1]) - 49).toFixed(1), 8.4, '#f28e2b') + label(46, (y + 7.3).toFixed(1), r[0], 8.3, { a: 'end', c: '#888' });
  });
  g += '<rect x="204.5" y="61" width="10" height="112" fill="#fff" stroke="#d4d4d4"/>';
  [453, 494, 548, 603, 657, 711, 765, 805].forEach((v, i) => g += label(X(v), 184, i + 'B', 8.3, { a: 'middle', c: '#888' }));
  g += label(117, 198.3, 'Price', 8, { w: 18, b: 1, c: '#555' }) + '<path d="M138 193h6M138 195.500h4M138 198h2" stroke="#777"/>';
  // Treemap: columns narrow and cells shorten towards the bottom right.
  const mix = t => { const a = [206, 170, 247], b = [246, 246, 246]; return 'rgb(' + a.map((v, i) => Math.round(v + (b[i] - v) * Math.min(1, t))) + ')'; };
  [[714, 789, '#a955ff'], [790, 862, '#b064ff'], [864, 920, '#bd7dfb'], [922, 965, '#c591fa'], [967, 1007, '#ca9cf8'], [1009, 1047, '#cda1f7'], [1049, 1084, '#cfa5f7']]
    .forEach(r => g += box(X(862), Y(r[0]), 31.6, ((r[1] - r[0]) / 3).toFixed(1), r[2]));
  let x = 253.5, w = 21.8, h0 = 18, c = 0;
  while (x < 411) {
    let y = 53, h = h0, k = 0;
    while (y < 176) {
      const hh = Math.min(c > 3 && k < 1 ? 12 : h, 176.5 - y);
      const t = c < 4 ? c * .2 + (y - 53) / 123 * .28 : .62 + (x - 320) / 92 * .12 + (y - 53) / 123 * .34;
      g += box(x.toFixed(1), y.toFixed(1), Math.min(w, 412 - x).toFixed(1), Math.max(hh, .5).toFixed(1), mix(t), 'stroke="#fff" stroke-opacity=".45" stroke-width=".6"');
      y += hh; h = Math.max(3, h * .93); k++;
    }
    x += w; w = Math.max(4.5, w * (c < 1 ? .75 : .86)); h0 = Math.max(5, h0 * .84); c++;
  }
  g += label(225, 65.5, 'Noida', 8, { w: 21.5, c: '#dfc2ff' });
  g += label(9.5, 225, 'HOUSEPRICE BASED ON RAINWATERHARVEST', 13, { w: 279.5 }) + label(201, 242.3, 'Location', 8, { w: 31.5, b: 1, c: '#555' });
  g += box(8, 244, 404, .8, '#ddd') + box(42.7, 234, .8, 20, '#ddd') + box(390.5, 234, .8, 20, '#ddd') + label(29.5, 254.5, '8B', 8, { c: '#888' });
  g += '<circle cx="277.3" cy="249.3" r="2.2" fill="#c56a80"/><path d="M330 249l2 5h-4z" fill="#f28e2b"/>';
  return g;
}

function pieThumb() {
  let g = label(9, 24, 'ALL SERVICES BASED ON LOACATIONS', 13, { w: 227 });
  const cols = ['#a0cbe8', '#ffbe7d', '#59a14f', '#b6992d', '#f1ce63', '#499894', '#86bcb6', '#ff9d9a', '!#c98b88', '#bab0ac', '#d37295', '#fabfd2', '#b07aa1', '#d4a6c8', '#9d7660', '#d7b5a6', '#d4a6c8', '#9d7660', '#d7b5a6', '#4e79a7', '#a0cbe8', '#f28e2b', '!#ffbe7d', '#59a14f', '#e15759', '#f1ce63', '#86bcb6', '#e15759', '#ff9d9a', '#79706e', '#bab0ac', '#d37295', '#b07aa1', '#8cd17d', '#b6992d'];
  let a = 0; const cx = 215.5, cy = 118, r = 43;
  cols.forEach(c => {
    const thin = c[0] === '!', b = a + (thin ? 3.5 : 353 / 33) * Math.PI / 180;
    g += '<path d="M' + cx + ' ' + cy + 'L' + (cx + r * Math.sin(a)).toFixed(2) + ' ' + (cy - r * Math.cos(a)).toFixed(2) + 'A' + r + ' ' + r + ' 0 0 1 ' + (cx + r * Math.sin(b)).toFixed(2) + ' ' + (cy - r * Math.cos(b)).toFixed(2) + 'Z" fill="' + c.replace('!', '') + '"/>';
    a = b;
  });
  [['Washing Machine', 483, 776, 638], ['24X7Security', 680, 771, 799], ['Swimming Pool', 452, 814, 588], ['Cafeteria', 750, 814, 832], ["Children'splayarea", 770, 857, 937], ['Shopping Mall', 437, 881, 563], ['Count of Chennai.csv', 776, 894, 960], ['Resale', 503, 949, 563], ['Gasconnection', 774, 965, 905], ['Rain Water Harvesting', 368, 985, 571], ['Gymnasium', 757, 1010, 861], ['Multipurpose Room', 423, 1032, 598], ['Landscaped Gardens', 672, 1065, 855]]
    .forEach(l => g += label((l[1] / 2.45 - 58).toFixed(1), (l[2] / 3 - 184.5).toFixed(1), l[0], 8.3, { w: ((l[3] - l[1]) / 2.45).toFixed(1), c: '#666' }));
  g += label(9, 225, 'HOUSEPRICE BASED ON NUMBER OF BEDROOMS', 13, { w: 294.5 }) + label(224, 242, 'Location', 8, { w: 31, b: 1, c: '#555' });
  g += box(139, 248, 2.5, 3, '#f5c0b0') + box(139, 251, 2.5, 4, '#a9c4dd');
  return '<g transform="translate(.8 0)">' + g + '</g>';
}

function intercomThumb() {
  let g = label(9.5, 24, 'HOUSEPRICE AND INTERCOM', 13, { w: 177, c: '#f8b77c' }) + label(35, 41, 'Location', 8, { w: 31, b: 1, c: '#555' });
  g += box(8, 43, 404, .8, '#ddd') + box(68.7, 33, .8, 60, '#ddd') + box(289.5, 43, .8, 50, '#ccc');
  [99, 130, 160.5, 191, 222, 252.5, 283, 304, 329, 359, 381].forEach(x => g += box(x, 43, .6, 50, '#eee'));
  g += label(17, 55, 'Andheri West', 8.3, { w: 49, c: '#888' }) + label(42, 71, 'Behala', 8.3, { w: 24, c: '#888' }) + label(17, 87.5, 'Borivali West', 8.3, { w: 49, c: '#888' });
  return g + box(69.3, 44.7, 51, 12.6, '#d37295') + box(356.5, 44.7, 56, 12.6, '#d37295') + box(69.3, 61.5, 63, 12.3, '#d37295') + box(69.3, 78, 53.5, 12.3, '#d37295');
}

const thumbs = [['Dashboard 1', mapThumb, ''], ['Dashboard 2', barThumb, ''], ['Dashboard 3', pieThumb, 'ml-px'], ['Dashboard 4', intercomThumb, '']];
document.getElementById('views').innerHTML = thumbs.map(v =>
  '<div class="h-[387px] ' + v[2] + '">' +
    '<div class="relative h-[255px] bg-white border border-[#d4d4d4] shadow-[0_1px_3px_rgba(0,0,0,0.25)]">' +
      '<svg class="absolute -left-px -top-px" width="413" height="254" viewBox="0 0 413 254">' + v[1]() + '</svg>' +
      '<span class="absolute left-[17px] top-[17px] w-5 h-[19px] bg-white border border-[#222] rounded-[1px]"></span>' +
    '</div>' +
    '<div class="mt-[15px] h-9 flex items-center pl-[17px] text-[18.5px] font-medium text-[#333]">' +
      '<span class="w-[273.5px] tracking-[0.7px]">' + v[0] + '</span>' +
      '<svg width="22" height="22"><use href="#info"/></svg>' +
      '<svg class="ml-[18px]" width="25" height="26"><use href="#star"/></svg>' +
      '<svg class="ml-[19px]" width="18" height="4"><use href="#dots"/></svg>' +
    '</div>' +
  '</div>').join('');
</script>
</body>
</html>
